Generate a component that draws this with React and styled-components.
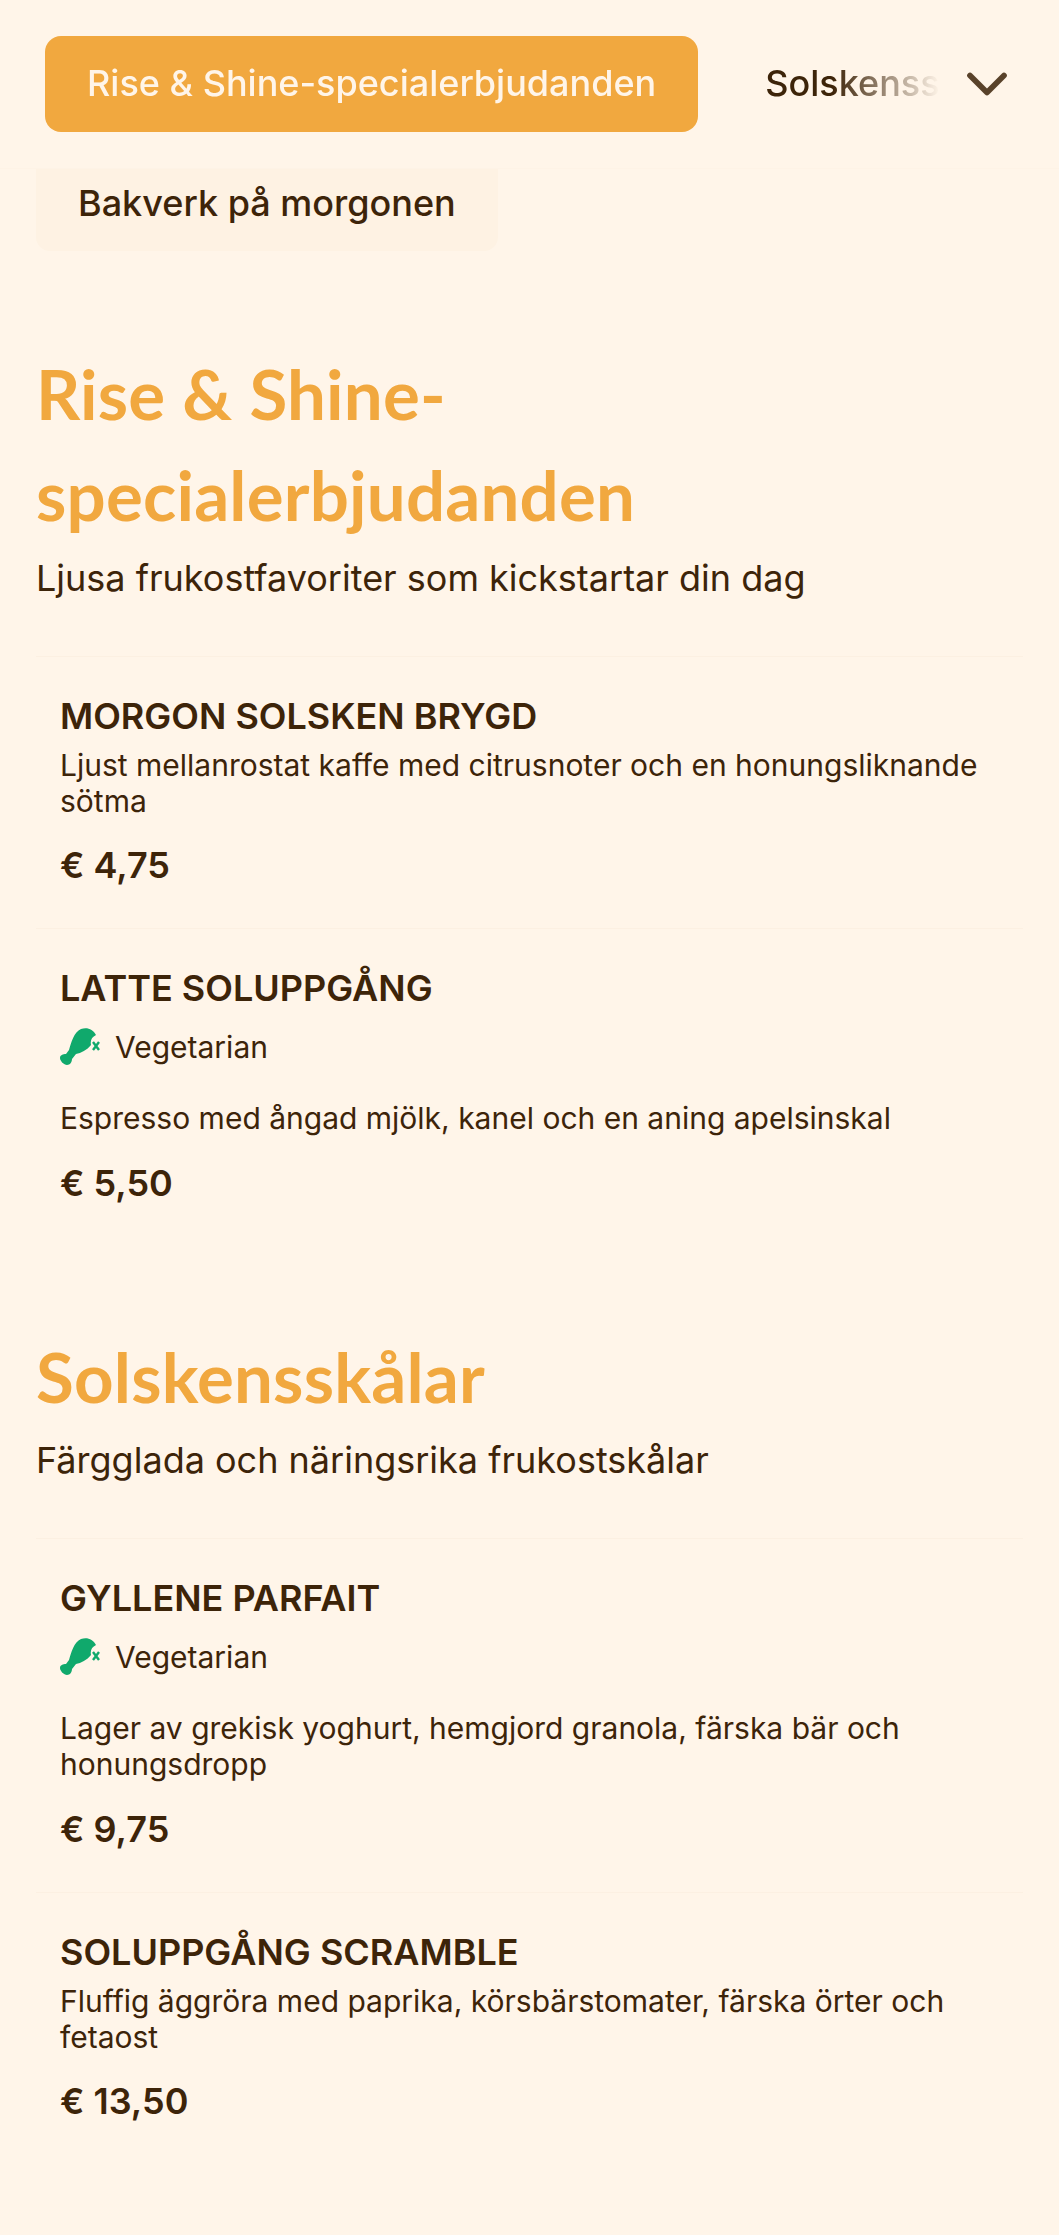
import styled, { createGlobalStyle } from 'styled-components';
import { ChevronDown } from 'lucide-react';

const GlobalStyle = createGlobalStyle`
  * {
    margin: 0;
    padding: 0;
    box-sizing: border-box;
  }
  html, body, #root {
    width: 100%;
    background-color: #FFF5E9;
    font-family: "Inter", "Liberation Sans", sans-serif;
    color: #3D2409;
  }
`;
const Page = styled.div`
  height: 2235px;
  overflow: hidden;
`;
const Nav = styled.nav`
  display: flex;
  align-items: center;
  height: 169px;
  padding: 0 52px 1px 45px;
  border-bottom: 1px solid #FEF3E6;
`;
const TabStrip = styled.div`
  display: flex;
  flex: 1;
  gap: 25px;
  overflow: hidden;
  margin-right: 27px;
  mask-image: linear-gradient(to right, #000 88%, transparent 100%);
`;
const Tab = styled.div`
  flex: none;
  display: flex;
  align-items: center;
  height: 96px;
  padding: 0 42px 2px;
  border-radius: 16px;
  font-size: 36px;
  font-weight: 500;
  white-space: nowrap;
  background: ${(p) => (p.$active ? '#F1A83F' : 'transparent')};
  color: ${(p) => (p.$active ? '#FFF5E9' : '#3D2409')};
`;
const Chevron = styled(ChevronDown)`
  flex: none;
  margin: 0 -14px;
  color: #59422A;
`;
const Content = styled.main`
  padding: 0 36px;
`;
const SubTab = styled.div`
  width: fit-content;
  height: 82px;
  padding: 0 42px 14px;
  display: flex;
  align-items: center;
  background: #FEF2E3;
  border-radius: 0 0 14px 14px;
  font-size: 36px;
  font-weight: 500;
  white-space: nowrap;
`;
const Section = styled.section`
  padding-top: ${(p) => p.$top}px;
`;
const Heading = styled.h2`
  font-family: "Lato", "Open Sans", sans-serif;
  font-size: 69px;
  line-height: 101px;
  font-weight: 700;
  letter-spacing: 0.2px;
  color: #F1A83F;
`;
const Lead = styled.p`
  font-size: 36px;
  line-height: 52px;
  margin-top: 7px;
`;
const Item = styled.article`
  margin-top: ${(p) => p.$top || 0}px;
  padding: 37px 24px 41px;
  border-top: 1px solid #FCF0E2;
`;
const Name = styled.h3`
  font-size: 36px;
  line-height: 44px;
  font-weight: 600;
`;
const Diet = styled.div`
  display: flex;
  align-items: center;
  gap: 15px;
  height: 40px;
  margin-top: 17px;
  margin-bottom: 33px;
  font-size: 30px;
`;
const Description = styled.p`
  font-size: 30px;
  line-height: 36px;
  margin-top: ${(p) => (p.$tight ? 9 : 0)}px;
`;
const Price = styled.p`
  font-size: 36px;
  line-height: 44px;
  font-weight: 600;
  margin-top: ${(p) => (p.$tight ? 24 : 25)}px;
`;

function VegIcon() {
  return (
    <svg width="40" height="38" viewBox="0 0 40 38" fill="none">
      <path
        d="M21 1C27 -1 33 1 36 7C32 9 30 12 31 17C27 22 21 25 16 26L12 31C12 34 10 37 7 37C4 37 0 33 0 30C0 27 3 26 6 26L9 22C11 15 14 4 21 1Z"
        fill="#10A96C"
      />
      <path d="M33 14L39 22M39 14L33 22" stroke="#10A96C" strokeWidth="2.4" />
    </svg>
  );
}

function MenuItem({ name, veg, description, price, top }) {
  return (
    <Item $top={top}>
      <Name>{name}</Name>
      {veg && (
        <Diet>
          <VegIcon />
          Vegetarian
        </Diet>
      )}
      <Description $tight={!veg}>{description}</Description>
      <Price $tight={!veg}>{price}</Price>
    </Item>
  );
}

export default function App() {
  return (
    <>
      <GlobalStyle />
      <Page>
        <Nav>
          <TabStrip>
            <Tab $active>Rise &amp; Shine-specialerbjudanden</Tab>
            <Tab>Solskensskålar</Tab>
          </TabStrip>
          <Chevron size={68} strokeWidth={2} />
        </Nav>
        <Content>
          <SubTab>Bakverk på morgonen</SubTab>
          <Section $top={92}>
            <Heading>
              Rise &amp; Shine-
              <br />
              specialerbjudanden
            </Heading>
            <Lead>Ljusa frukostfavoriter som kickstartar din dag</Lead>
            <MenuItem
              top={52}
              name="MORGON SOLSKEN BRYGD"
              description="Ljust mellanrostat kaffe med citrusnoter och en honungsliknande sötma"
              price="€ 4,75"
            />
            <MenuItem
              name="LATTE SOLUPPGÅNG"
              veg
              description="Espresso med ångad mjölk, kanel och en aning apelsinskal"
              price="€ 5,50"
            />
          </Section>
          <Section $top={80}>
            <Heading>Solskensskålar</Heading>
            <Lead>Färgglada och näringsrika frukostskålar</Lead>
            <MenuItem
              top={52}
              name="GYLLENE PARFAIT"
              veg
              description="Lager av grekisk yoghurt, hemgjord granola, färska bär och honungsdropp"
              price="€ 9,75"
            />
            <MenuItem
              name="SOLUPPGÅNG SCRAMBLE"
              description="Fluffig äggröra med paprika, körsbärstomater, färska örter och fetaost"
              price="€ 13,50"
            />
          </Section>
        </Content>
      </Page>
    </>
  );
}
